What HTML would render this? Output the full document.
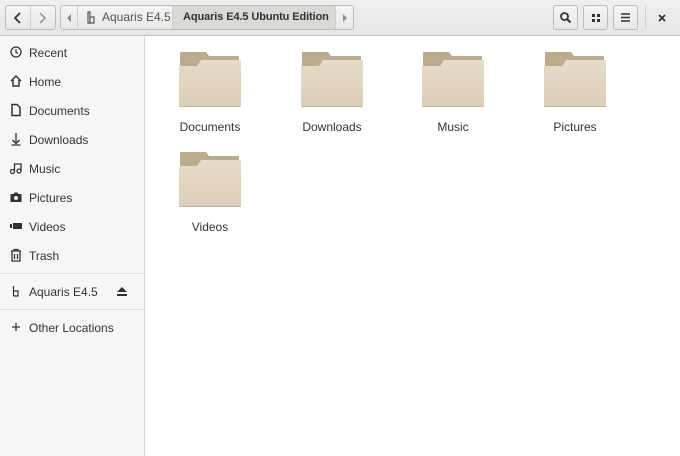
<!DOCTYPE html>
<html><head><style>
*{margin:0;padding:0;box-sizing:border-box}
body{width:680px;height:456px;overflow:hidden;font-family:"Liberation Sans",sans-serif;font-size:12px;color:#2e3436;background:#fff;position:relative}
#hdr{position:absolute;left:0;top:0;width:680px;height:36px;background:linear-gradient(#efefef,#e6e6e6);border-bottom:1px solid #c0c0bd}
.btn{position:absolute;top:5px;height:25px;border:1px solid #bcbcb8;border-radius:3px;background:linear-gradient(#f4f4f3,#e8e8e7)}
#side{position:absolute;left:0;top:36px;width:145px;height:420px;background:#f6f6f6;border-right:1px solid #d6d6d3}
.it{position:absolute;left:29px;font-size:12px;color:#2e3436}
.ic{position:absolute;left:9px;width:14px;height:14px}
.sep{position:absolute;left:0;width:144px;height:1px;background:#e2e2df}
.f{position:absolute;width:62px;height:57px}
.lb{position:absolute;width:110px;text-align:center;font-size:12px}
</style></head><body>
<div id="hdr">
 <div class="btn" style="left:5px;width:51px"></div>
 <div style="position:absolute;left:30px;top:6px;width:1px;height:23px;background:#cfcfcc"></div>
 <svg style="position:absolute;left:11px;top:11px" width="14" height="14"><path d="M9 2L4 7l5 5" stroke="#2e3436" stroke-width="1.8" fill="none"/></svg>
 <svg style="position:absolute;left:35px;top:11px" width="14" height="14"><path d="M5 2l5 5-5 5" stroke="#8b8e8f" stroke-width="1.5" fill="none"/></svg>
 <div class="btn" style="left:60px;width:294px"></div>
 <div style="position:absolute;left:173px;top:6px;width:162px;height:23px;background:#d9d9d6"></div>
 <div style="position:absolute;left:77px;top:6px;width:1px;height:23px;background:#cfcfcc"></div>
 <div style="position:absolute;left:172px;top:6px;width:1px;height:23px;background:#cfcfcc"></div>
 <div style="position:absolute;left:335px;top:6px;width:1px;height:23px;background:#cfcfcc"></div>
 <svg style="position:absolute;left:65px;top:13px" width="8" height="10"><path d="M6 1L2 5l4 4z" fill="#8b8e8f"/></svg>
 <svg style="position:absolute;left:341px;top:13px" width="8" height="10"><path d="M2 1l4 4-4 4z" fill="#8b8e8f"/></svg>
 <svg style="position:absolute;left:87px;top:11px" width="8" height="13"><path d="M1 1h2v11H1zM3 6h4v6H3z" fill="none" stroke="#555" stroke-width="1.2"/></svg>
 <div style="position:absolute;left:102px;top:10px;color:#555">Aquaris E4.5</div>
 <div style="position:absolute;left:183px;top:11px;font-weight:bold;color:#2e3436;font-size:11px;letter-spacing:-0.1px">Aquaris E4.5 Ubuntu Edition</div>
 <div class="btn" style="left:553px;width:25px"></div>
 <svg style="position:absolute;left:559px;top:11px" width="13" height="13"><circle cx="5.5" cy="5.5" r="3.5" stroke="#2e3436" stroke-width="1.8" fill="none"/><path d="M8 8l3.5 3.5" stroke="#2e3436" stroke-width="2"/></svg>
 <div class="btn" style="left:583px;width:25px"></div>
 <svg style="position:absolute;left:591px;top:13px" width="10" height="10"><path d="M1 1h3v3H1zM6 1h3v3H6zM1 6h3v3H1zM6 6h3v3H6z" fill="#2e3436"/></svg>
 <div class="btn" style="left:613px;width:25px"></div>
 <svg style="position:absolute;left:620px;top:12px" width="11" height="11"><path d="M1 2h9M1 5.5h9M1 9h9" stroke="#2e3436" stroke-width="1.5"/></svg>
 <div style="position:absolute;left:645px;top:6px;width:1px;height:23px;background:#d0d0cd"></div>
 <svg style="position:absolute;left:657px;top:13px" width="10" height="10"><path d="M2 2l6 6M8 2l-6 6" stroke="#2e3436" stroke-width="1.8"/></svg>
</div>
<div id="side">
 <svg class="ic" style="top:9px" viewBox="0 0 14 14"><circle cx="7" cy="7" r="5" fill="none" stroke="#2e3436" stroke-width="1.3"/><path d="M7 4v3.5l2 1" stroke="#2e3436" fill="none" stroke-width="1.2"/></svg>
 <div class="it" style="top:10px">Recent</div>
 <svg class="ic" style="top:38px" viewBox="0 0 14 14"><path d="M2 7l5-5 5 5M4 6v6h6V6" fill="none" stroke="#2e3436" stroke-width="1.5"/></svg>
 <div class="it" style="top:39px">Home</div>
 <svg class="ic" style="top:67px" viewBox="0 0 14 14"><path d="M3 1.5h5l3 3v8H3z" fill="none" stroke="#2e3436" stroke-width="1.5"/></svg>
 <div class="it" style="top:68px">Documents</div>
 <svg class="ic" style="top:96px" viewBox="0 0 14 14"><path d="M7 1v10M3.5 8L7 11.5 10.5 8M2.5 13h9" fill="none" stroke="#2e3436" stroke-width="1.3"/></svg>
 <div class="it" style="top:97px">Downloads</div>
 <svg class="ic" style="top:125px" viewBox="0 0 14 14"><circle cx="3.5" cy="10.5" r="2" fill="none" stroke="#2e3436" stroke-width="1.3"/><circle cx="10" cy="10" r="2" fill="none" stroke="#2e3436" stroke-width="1.3"/><path d="M5.5 10V3h6.5v7" fill="none" stroke="#2e3436" stroke-width="1.3"/></svg>
 <div class="it" style="top:126px">Music</div>
 <svg class="ic" style="top:154px" viewBox="0 0 14 14"><path d="M1.5 4h3l1-1.5h3L9.5 4h3v8h-11z" fill="#2e3436"/><circle cx="7" cy="8" r="2" fill="#f6f6f6"/></svg>
 <div class="it" style="top:155px">Pictures</div>
 <svg class="ic" style="top:183px" viewBox="0 0 14 14"><path d="M1 5h2v4H1zM4 4h9v6H4z" fill="#2e3436"/></svg>
 <div class="it" style="top:184px">Videos</div>
 <svg class="ic" style="top:212px" viewBox="0 0 14 14"><path d="M2 3h10M5 3V1.5h4V3M3 3v10h8V3M5.5 6v5M8.5 6v5" fill="none" stroke="#2e3436" stroke-width="1.3"/></svg>
 <div class="it" style="top:213px">Trash</div>
 <div class="sep" style="top:237px"></div>
 <svg class="ic" style="top:248px" viewBox="0 0 14 14"><path d="M4.5 2v10M4.5 7h4.5v5H4.5" fill="none" stroke="#2e3436" stroke-width="1.2"/></svg>
 <div class="it" style="top:249px">Aquaris E4.5</div>
 <svg style="position:absolute;left:116px;top:250px" width="12" height="11"><path d="M6 1l5 5H1z M1 8h10v2H1z" fill="#2e3436"/></svg>
 <div class="sep" style="top:273px"></div>
 <svg class="ic" style="top:284px" viewBox="0 0 14 14"><path d="M7 3v8M3 7h8" stroke="#2e3436" stroke-width="1.3"/></svg>
 <div class="it" style="top:285px">Other Locations</div>
</div>
<svg width="0" height="0" style="position:absolute"><defs>
<linearGradient id="g" x1="0" y1="0" x2="0" y2="1"><stop offset="0" stop-color="#e6dbc8"/><stop offset="1" stop-color="#dccfb8"/></linearGradient>
<symbol id="fold" viewBox="0 0 62 57"><path d="M1 2q0-1 1-1h25l3 4h29q1 0 1 1v45H1z" fill="#bcab8d"/><path d="M0 15h18l4-6h39q1 0 1 1v45q0 1-1 1H1q-1 0-1-1z" fill="url(#g)"/><path d="M0.5 55.5h61" stroke="#c2b59e" stroke-width="1"/></symbol>
</defs></svg>
<svg class="f" style="left:179px;top:51px"><use href="#fold"/></svg>
<svg class="f" style="left:301px;top:51px"><use href="#fold"/></svg>
<svg class="f" style="left:422px;top:51px"><use href="#fold"/></svg>
<svg class="f" style="left:544px;top:51px"><use href="#fold"/></svg>
<svg class="f" style="left:179px;top:151px"><use href="#fold"/></svg>
<div class="lb" style="left:155px;top:120px">Documents</div>
<div class="lb" style="left:277px;top:120px">Downloads</div>
<div class="lb" style="left:398px;top:120px">Music</div>
<div class="lb" style="left:520px;top:120px">Pictures</div>
<div class="lb" style="left:155px;top:220px">Videos</div>
</body></html>
